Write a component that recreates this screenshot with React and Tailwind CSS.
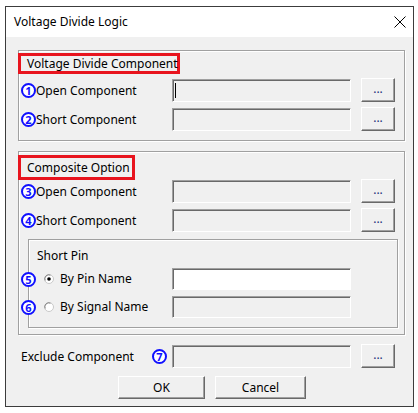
import React from 'react';

// classic win32 look: sunken edit box, raised push button, etched group frame
const sunken = "border border-t-[#a0a0a0] border-l-[#a0a0a0] border-b-white border-r-white shadow-[inset_1px_1px_0_#696969]";
const raised = "border border-t-white border-l-white border-b-[#696969] border-r-[#696969] shadow-[inset_-1px_-1px_0_#a0a0a0] bg-[#f0f0f0]";
const etched = "border border-[#a0a0a0] shadow-[inset_1px_1px_0_#fff,1px_1px_0_#fff]";

const Num = ({ n }) => (
  <span className="shrink-0 w-[15px] h-[15px] rounded-full border-2 border-[#1010ff] bg-white text-[#1010ff] text-[11px] font-bold leading-none flex items-center justify-center">
    {n}
  </span>
);

const Field = ({ white, caret }) => (
  <div className={`w-[179px] h-full flex items-center ${sunken} ${white ? 'bg-white' : 'bg-[#f0f0f0]'}`}>
    {caret && <span className="ml-[2px] w-px h-[15px] bg-black" />}
  </div>
);

const Browse = () => (
  <button className={`ml-[10px] -mt-px w-[34px] h-[24px] flex items-center justify-center ${raised}`}>
    <span className="text-[12px] leading-none text-[#1b2f7a] -mt-[3px]">...</span>
  </button>
);

const Radio = ({ checked }) => (
  <svg width="10" height="10" viewBox="0 0 10 10" className="shrink-0">
    <circle cx="5" cy="5" r="4.5" fill="#fff" stroke="#c8c8c8" />
    <path d="M1.2 6.5 A4 4 0 0 1 6.5 1.2" fill="none" stroke="#808080" strokeWidth="1" />
    {checked && <circle cx="5" cy="5" r="1.8" fill="#000" />}
  </svg>
);

const CompRow = ({ n, label, caret, className = "" }) => (
  <div className={`h-[23px] flex items-center ${className}`}>
    <div className="w-[151px] ml-[2px] flex items-center">
      <Num n={n} />
      <span>{label}</span>
    </div>
    <Field caret={caret} />
    <Browse />
  </div>
);

const PinRow = ({ n, label, checked, white, className = "" }) => (
  <div className={`h-[22px] flex items-center ${className}`}>
    <div className="w-[151px] -ml-[8px] flex items-center">
      <Num n={n} />
      <span className="ml-[8px]"><Radio checked={checked} /></span>
      <span className="ml-[6px]">{label}</span>
    </div>
    <Field white={white} />
  </div>
);

export default function App() {
  return (
    <div className="w-[418px] h-[413px] bg-white pt-[6px] pl-[5px] font-['Noto_Sans',sans-serif] text-[12px] text-black">
      <div className="w-[409px] h-[401px] border border-[#3c3c3c] flex flex-col">
        {/* title bar */}
        <div className="h-[30px] bg-white flex items-center justify-between pl-[8px] pr-[7px]">
          <span className="text-[12px]">Voltage Divide Logic</span>
          <svg width="12" height="12" viewBox="0 0 12 12">
            <path d="M0.5 0.5 L11.5 11.5 M11.5 0.5 L0.5 11.5" stroke="#000" strokeWidth="1" />
          </svg>
        </div>

        <div className="flex-1 bg-[#f0f0f0] flex flex-col">
          {/* Voltage Divide Component */}
          <div className={`mt-[13px] ml-[12px] mr-[8px] pb-[9px] ${etched}`}>
            <div className="mt-[2px] -ml-px w-[162px] h-[21px] border-[3px] border-[#e8141e] pl-[6px] flex items-center whitespace-nowrap">
              Voltage Divide Component
            </div>
            <CompRow n="1" label="Open Component" caret className="mt-[5px]" />
            <CompRow n="2" label="Short Component" className="mt-[6px]" />
          </div>

          {/* Composite Option */}
          <div className={`mt-[10px] ml-[12px] mr-[8px] pb-[6px] ${etched}`}>
            <div className="mt-[3px] -ml-px w-[117px] h-[25px] border-[3px] border-[#e8141e] pl-[6px] flex items-center whitespace-nowrap">
              Composite Option
            </div>
            <CompRow n="3" label="Open Component" />
            <CompRow n="4" label="Short Component" className="mt-[6px]" />

            <div className={`mt-[7px] ml-[9px] mr-[6px] pb-[9px] ${etched}`}>
              <div className="mt-[7px] pl-[8px] h-[17px] leading-[17px]">Short Pin</div>
              <PinRow n="5" label="By Pin Name" checked white className="mt-[4px]" />
              <PinRow n="6" label="By Signal Name" className="mt-[6px]" />
            </div>
          </div>

          {/* Exclude */}
          <div className="mt-[10px] ml-[15px] h-[23px] flex items-center">
            <span className="w-[131px]">Exclude Component</span>
            <Num n="7" />
            <div className="ml-[5px] h-full flex">
              <Field />
            </div>
            <Browse />
          </div>

          <div className="mt-[8px] ml-[112px] h-[23px] flex gap-[10px]">
            <button className={`w-[87px] h-full ${raised}`}>OK</button>
            <button className={`w-[91px] h-full ${raised}`}>Cancel</button>
          </div>
        </div>
      </div>
    </div>
  );
}
